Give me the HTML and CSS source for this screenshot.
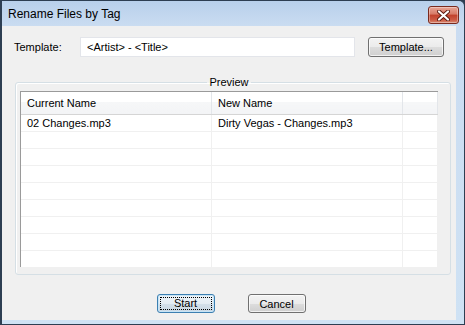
FILE: index.html
```html
<!DOCTYPE html>
<html lang="en">
<head>
    <meta charset="UTF-8">
    <meta name="viewport" content="width=device-width, initial-scale=1.0">
    <title>Rename Files by Tag</title>
    <link rel="stylesheet" href="styles.css">
</head>
<body>
    <div class="window">
        <div class="titlebar">
            <span class="title">Rename Files by Tag</span>
            <button type="button" class="close" title="Close">
                <svg width="13" height="11" viewBox="0 0 13 11">
                    <path d="M2 1.5 L11 9.5 M11 1.5 L2 9.5" stroke="#5a1a10" stroke-width="4" stroke-linecap="round"/>
                    <path d="M2 1.5 L11 9.5 M11 1.5 L2 9.5" stroke="#ffffff" stroke-width="2.2" stroke-linecap="round"/>
                </svg>
            </button>
        </div>
        <div class="client">
            <div class="template-row">
                <label for="template">Template:</label>
                <input type="text" id="template" name="template" value="&lt;Artist&gt; - &lt;Title&gt;">
                <button type="button" class="btn template-btn">Template...</button>
            </div>
            <fieldset class="preview">
                <legend>Preview</legend>
                <div class="list">
                    <table class="files">
                        <thead>
                            <tr>
                                <th class="col-current">Current Name</th>
                                <th class="col-new">New Name</th>
                                <th class="col-rest"></th>
                            </tr>
                        </thead>
                        <tbody>
                            <tr><td>02 Changes.mp3</td><td>Dirty Vegas - Changes.mp3</td><td></td></tr>
                            <tr><td></td><td></td><td></td></tr>
                            <tr><td></td><td></td><td></td></tr>
                            <tr><td></td><td></td><td></td></tr>
                            <tr><td></td><td></td><td></td></tr>
                            <tr><td></td><td></td><td></td></tr>
                            <tr><td></td><td></td><td></td></tr>
                            <tr><td></td><td></td><td></td></tr>
                            <tr><td></td><td></td><td></td></tr>
                        </tbody>
                    </table>
                </div>
            </fieldset>
            <div class="button-row">
                <button type="button" class="btn default" id="start"><span class="focus">Start</span></button>
                <button type="button" class="btn" id="cancel">Cancel</button>
            </div>
        </div>
    </div>
</body>
</html>
```

FILE: styles.css
```css
body {
    margin: 0;
    font-family: "Liberation Sans", Arial, sans-serif;
    font-size: 11px;
    color: #000;
    background-color: #2d3e52;
}
.window {
    width: 465px;
    height: 325px;
    box-sizing: border-box;
    border: 1px solid #2d3e52;
    border-left-width: 2px;
    border-top-right-radius: 6px;
    background: linear-gradient(to bottom, #b8d0eb 0, #cadcf1 25px, #cfe2f4 100%);
    overflow: hidden;
}
.titlebar {
    height: 25px;
    display: flex;
    align-items: center;
    justify-content: space-between;
    padding: 0 5px 0 6px;
}
.title {
    font-size: 12px;
    margin-top: 1px;
}
.close {
    width: 31px;
    height: 18px;
    margin-top: 3px;
    padding: 0;
    border: 1px solid #7a2a1e;
    border-radius: 3px;
    background: linear-gradient(to bottom, #e8a595 0%, #d77a66 45%, #c1402b 50%, #cc5a43 80%, #d98a72 100%);
    box-shadow: inset 0 0 0 1px rgba(255, 255, 255, 0.35);
    display: flex;
    align-items: center;
    justify-content: center;
}
.client {
    height: 294px;
    margin-right: 8px;
    background-color: #f0f0f0;
    box-sizing: border-box;
    overflow: hidden;
}
.template-row {
    display: flex;
    align-items: center;
    padding: 11px 0 0 12px;
}
.template-row label {
    width: 66px;
}
.template-row input {
    width: 275px;
    height: 20px;
    box-sizing: border-box;
    border: 1px solid #e3e5ea;
    padding: 0 6px;
    font-family: inherit;
    font-size: 11px;
    background-color: #fff;
}
.btn {
    height: 19px;
    box-sizing: border-box;
    padding: 0;
    border: 1px solid #707070;
    border-radius: 3px;
    background: linear-gradient(to bottom, #f3f3f3 0%, #ebebeb 50%, #dddddd 50%, #cfcfcf 100%);
    box-shadow: inset 0 0 0 1px rgba(255, 255, 255, 0.7);
    font-family: inherit;
    font-size: 11px;
    color: #000;
}
.template-btn {
    width: 76px;
    height: 20px;
    margin-left: 13px;
}
.preview {
    margin: 18px 5px 0 13px;
    padding: 2px 12px 7px 4px;
    border: 1px solid #d5dfe5;
    border-radius: 3px;
    box-shadow: inset 1px 1px 0 #fff;
}
.preview legend {
    margin: 0 auto;
    padding: 0 2px;
    line-height: 14px;
}
.list {
    height: 175px;
    overflow: hidden;
    background-color: #fff;
    border-left: 1px solid #9a9a9a;
    border-top: 1px solid #9a9a9a;
}
.files {
    width: 100%;
    border-collapse: collapse;
    table-layout: fixed;
}
.files th {
    height: 22px;
    padding: 0 6px;
    text-align: left;
    font-weight: normal;
    background: linear-gradient(to bottom, #ffffff 0%, #ffffff 45%, #f6f7f8 45%, #f3f4f6 100%);
    border-right: 1px solid #e3e6ea;
    border-bottom: 1px solid #d5d5d5;
}
.files .col-current,
.files .col-new {
    width: 178px;
}
.files td {
    height: 16px;
    padding: 0 6px;
    border-right: 1px solid #f0f0f0;
    border-bottom: 1px solid #f0f0f0;
    white-space: nowrap;
}
.button-row {
    display: flex;
    justify-content: center;
    gap: 33px;
    padding: 19px 0 0 4px;
}
.button-row .btn {
    width: 58px;
}
.btn.default {
    border-color: #3c7fb1;
    box-shadow: inset 0 0 0 1px #c6e4f6;
    background: linear-gradient(to bottom, #eef4f9 0%, #e4ecf3 50%, #d4e0ea 50%, #c9d7e3 100%);
    padding: 2px;
}
.btn.default .focus {
    display: block;
    height: 100%;
    box-sizing: border-box;
    border: 1px dotted #000;
    line-height: 11px;
}
```
